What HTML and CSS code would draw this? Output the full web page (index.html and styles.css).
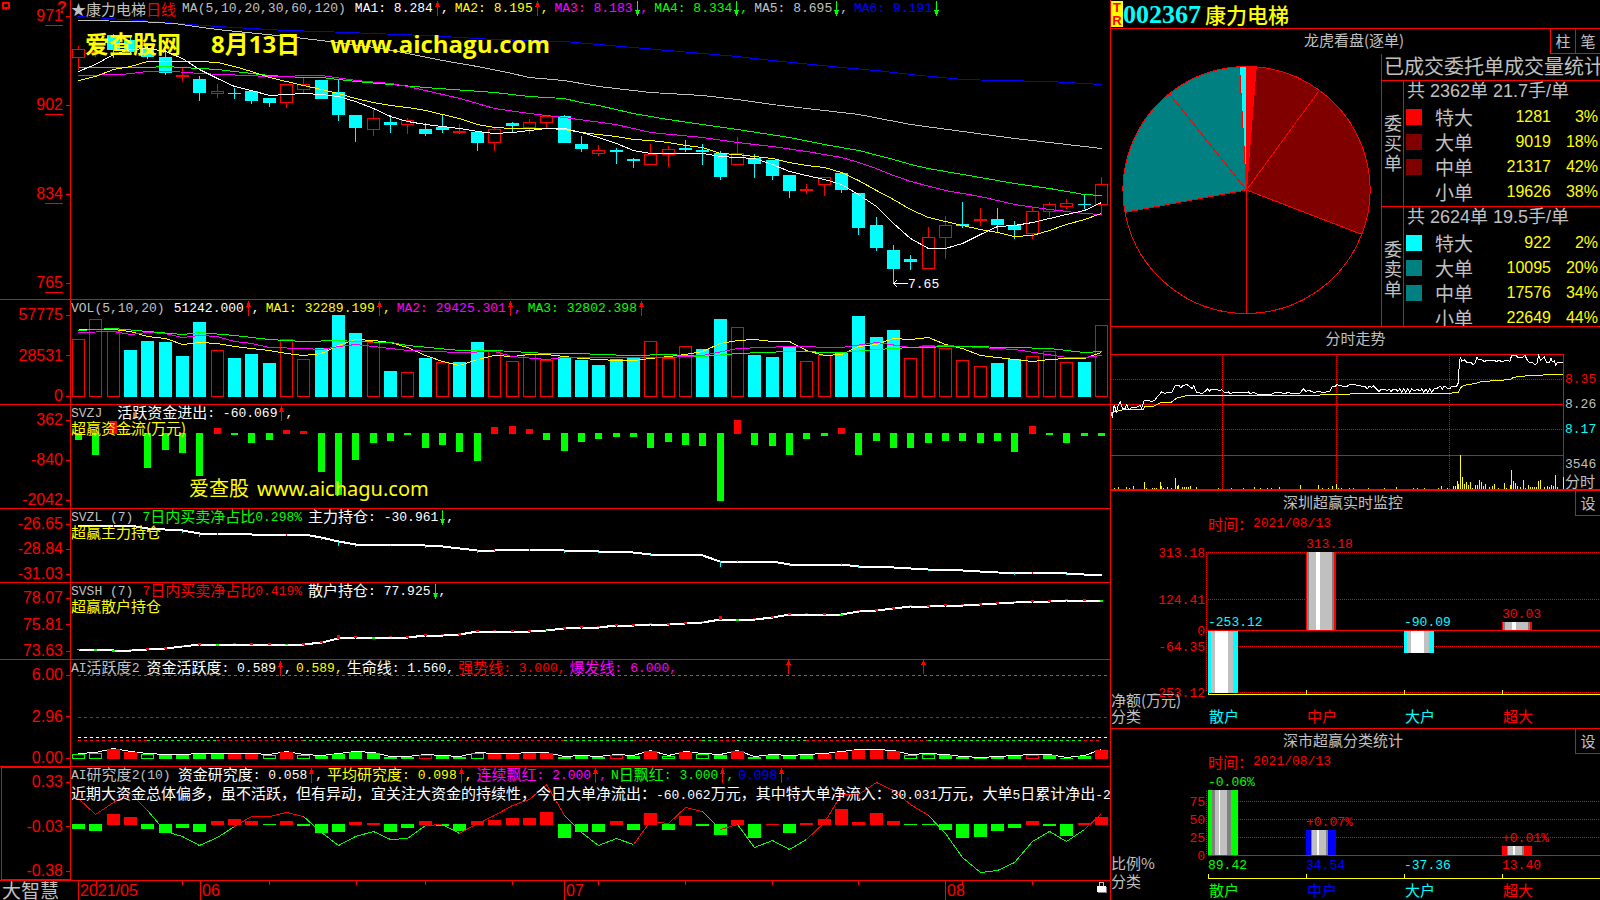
FILE: index.html
```html
<!DOCTYPE html>
<html lang="zh-CN">
	<head>
		<meta charset="utf-8">
		<title>大智慧 - 康力电梯 002367</title>
		<link rel="stylesheet" href="styles.css">
	</head>
	<body>
		<!-- trend arrows used next to the indicator values -->
		<svg class="defs">
			<symbol id="up" viewBox="0 0 8 15"><path stroke="#f00" fill="none" d="M4.5 0V15M2 5.5H7M3 4.5H6M3 3.5H6M3 2.5H6" /></symbol>
			<symbol id="down" viewBox="0 0 8 15"><path stroke="#0f0" fill="none" d="M4.5 0V15M2 9.5H7M3 10.5H6M3 11.5H6M3 12.5H6" /></symbol>
		</svg>

		<main class="terminal">
			<div class="charts">
				<section class="panel kline">
					<div class="axis">
						<svg class="mark" width="8" height="8"><path d="M1 1H7V6H1ZM4 6V8" stroke="#f00" stroke-width="2" fill="none" /></svg>
						<span class="help">?</span>
						<span>971</span><span>902</span><span>834</span><span>765</span>
					</div>
					<div class="plot">
						<svg id="kline" viewBox="71 0 1039 299" preserveAspectRatio="none"></svg>
						<div class="legend gray">
							<span class="c">★康力电梯<span class="red">日线</span></span>
							<span class="params">MA(5,10,20,30,60,120)</span>
							<span class="white">MA1: 8.284<svg><use href="#up" /></svg>,</span>
							<span class="yellow">MA2: 8.195<svg><use href="#up" /></svg>,</span>
							<span class="magenta">MA3: 8.183<svg><use href="#down" /></svg>,</span>
							<span class="green">MA4: 8.334<svg><use href="#down" /></svg>,</span>
							<span class="gray">MA5: 8.695<svg><use href="#down" /></svg>,</span>
							<span class="blue">MA6: 9.191<svg><use href="#down" /></svg></span>
						</div>
						<div class="banner"><span>爱查股网</span><span>8月13日</span><span>www.aichagu.com</span></div>
					</div>
				</section>

				<section class="panel vol">
					<div class="axis"><span>57775</span><span>28531</span><span>0</span></div>
					<div class="plot">
						<svg id="vol" viewBox="71 300 1039 104" preserveAspectRatio="none"></svg>
						<div class="legend">
							<span class="params gray">VOL(5,10,20)</span>
							<span class="white">51242.000<svg><use href="#up" /></svg>,</span>
							<span class="yellow">MA1: 32289.199<svg><use href="#up" /></svg>,</span>
							<span class="magenta">MA2: 29425.301<svg><use href="#up" /></svg>,</span>
							<span class="green">MA3: 32802.398<svg><use href="#up" /></svg></span>
						</div>
					</div>
				</section>

				<section class="panel flow">
					<div class="axis"><span>362</span><span>-840</span><span>-2042</span></div>
					<div class="plot">
						<svg id="flow" viewBox="71 405 1039 103" preserveAspectRatio="none"></svg>
						<div class="legend">
							<span class="name gray">SVZJ</span>
							<span class="white"><b>活跃资金进出</b>: -60.069<svg><use href="#up" /></svg>,</span>
						</div>
						<p class="caption">超赢资金流(万元)</p>
						<div class="banner small"><span>爱查股</span><span>www.aichagu.com</span></div>
					</div>
				</section>

				<section class="panel main-hold">
					<div class="axis"><span>-26.65</span><span>-28.84</span><span>-31.03</span></div>
					<div class="plot">
						<svg id="mainHold" viewBox="71 509 1039 73" preserveAspectRatio="none"></svg>
						<div class="legend">
							<span class="params gray">SVZL (7)</span>
							<span class="green">7<b>日内买卖净占比</b>0.298%</span>
							<span class="white"><b>主力持仓</b>: -30.961<svg><use href="#down" /></svg>,</span>
						</div>
						<p class="caption">超赢主力持仓</p>
					</div>
				</section>

				<section class="panel retail-hold">
					<div class="axis"><span>78.07</span><span>75.81</span><span>73.63</span></div>
					<div class="plot">
						<svg id="retailHold" viewBox="71 583 1039 76" preserveAspectRatio="none"></svg>
						<div class="legend">
							<span class="params gray">SVSH (7)</span>
							<span class="red">7<b>日内买卖净占比</b>0.419%</span>
							<span class="white"><b>散户持仓</b>: 77.925<svg><use href="#down" /></svg>,</span>
						</div>
						<p class="caption">超赢散户持仓</p>
					</div>
				</section>

				<section class="panel active">
					<div class="axis"><span>6.00</span><span>2.96</span><span>0.00</span></div>
					<div class="plot">
						<svg id="active" viewBox="71 660 1039 106" preserveAspectRatio="none"></svg>
						<div class="legend tight">
							<span class="params gray">AI<b>活跃度</b>2</span>
							<span class="white"><b>资金活跃度</b>: 0.589<svg><use href="#up" /></svg>,</span>
							<span class="yellow">0.589,</span>
							<span class="white"><b>生命线</b>: 1.560,</span>
							<span class="red"><b>强势线</b>: 3.000,</span>
							<span class="magenta"><b>爆发线</b>: 6.000,</span>
						</div>
					</div>
				</section>

				<section class="panel research">
					<div class="axis"><span>0.33</span><span>-0.03</span><span>-0.38</span></div>
					<div class="plot">
						<svg id="research" viewBox="71 767 1039 113" preserveAspectRatio="none"></svg>
						<div class="legend tight">
							<span class="params gray">AI<b>研究度</b>2(10)</span>
							<span class="white"><b>资金研究度</b>: 0.058<svg><use href="#up" /></svg>,</span>
							<span class="yellow"><b>平均研究度</b>: 0.098<svg><use href="#up" /></svg>,</span>
							<span class="magenta"><b>连续飘红</b>: 2.000<svg><use href="#up" /></svg>,</span>
							<span class="green">N<b>日飘红</b>: 3.000<svg><use href="#up" /></svg>,</span>
							<span class="blue">0.098<svg><use href="#up" /></svg>,</span>
						</div>
						<p class="comment"><b>近期大资金总体偏多，虽不活跃，但有异动，宜关注大资金的持续性，今日大单净流出：</b>-60.062<b>万元，其中特大单净流入：</b>30.031<b>万元，大单</b>5<b>日累计净出</b>-2</p>
					</div>
				</section>

				<footer class="dates">
					<span class="brand">大智慧</span>
					<svg id="dates" viewBox="71 881 1039 19"></svg>
				</footer>
			</div>

			<aside class="side">
				<header class="stock">
					<span class="tr"><i>T</i><i>R</i></span>
					<span class="code">002367</span>
					<h1>康力电梯</h1>
				</header>

				<section class="orders">
					<div class="title wide">
						<h2>龙虎看盘(逐单)</h2>
						<button type="button">柱</button><button type="button">笔</button>
					</div>
					<div class="orders-body">
						<svg id="pie" viewBox="0 0 270 272"></svg>
						<div class="stats">
							<h3>已成交委托单成交量统计</h3>
							<div class="group">
								<div class="side-name">委买单</div>
								<table>
									<caption>共 2362单 21.7手/单</caption>
									<tr><td><i class="sw" style="background:#f00"></i></td><th>特大</th><td>1281</td><td>3%</td></tr>
									<tr><td><i class="sw" style="background:#800000"></i></td><th>大单</th><td>9019</td><td>18%</td></tr>
									<tr><td><i class="sw" style="background:#800000"></i></td><th>中单</th><td>21317</td><td>42%</td></tr>
									<tr><td></td><th>小单</th><td>19626</td><td>38%</td></tr>
								</table>
							</div>
							<div class="group">
								<div class="side-name">委卖单</div>
								<table>
									<caption>共 2624单 19.5手/单</caption>
									<tr><td><i class="sw" style="background:#0ff"></i></td><th>特大</th><td>922</td><td>2%</td></tr>
									<tr><td><i class="sw" style="background:#008080"></i></td><th>大单</th><td>10095</td><td>20%</td></tr>
									<tr><td><i class="sw" style="background:#008080"></i></td><th>中单</th><td>17576</td><td>34%</td></tr>
									<tr><td></td><th>小单</th><td>22649</td><td>44%</td></tr>
								</table>
							</div>
						</div>
					</div>
				</section>

				<section class="intraday">
					<h2>分时走势</h2>
					<div class="intraday-body">
						<svg id="intraday" viewBox="18 88 1359 405" preserveAspectRatio="none"></svg>
						<div class="prices">
							<span class="red">8.35</span>
							<span class="gray">8.26</span>
							<span class="cyan">8.17</span>
							<span class="gray vmax">3546</span>
							<span class="gray"><b>分时</b></span>
						</div>
					</div>
				</section>

				<section class="monitor">
					<div class="title"><h2>深圳超赢实时监控</h2><button type="button">设</button></div>
					<p class="date"><b>时间：</b>2021/08/13</p>
					<svg id="monitor" viewBox="1111 532 489 196"></svg>
				</section>

				<section class="monitor classes">
					<div class="title"><h2>深市超赢分类统计</h2><button type="button">设</button></div>
					<p class="date"><b>时间：</b>2021/08/13</p>
					<svg id="classes" viewBox="1111 770 489 130"></svg>
				</section>
			</aside>
		</main>
		<script src="script.js"></script>
	</body>
</html>
```

FILE: styles.css
```css
*
{
	box-sizing: border-box;
	margin: 0;
	padding: 0;
}
body
{
	background: #000;
	color: #c0c0c0;
	font: 13px/16px "Liberation Mono", "Noto Sans CJK SC", monospace;
	overflow: hidden;
}
h1, h2, h3, th, caption, b
{
	font-weight: normal;
}
h2, b, .c
{
	font-family: "Noto Sans CJK SC", sans-serif;
	font-size: 15px;
	line-height: 16px;
}
i
{
	font-style: normal;
}
svg
{
	display: block;
	shape-rendering: crispEdges;
}
.defs
{
	display: none;
}

.red { color: #f00; }
.green { color: #0f0; }
.blue { color: #00f; }
.cyan { color: #0ff; }
.yellow { color: #ff0; }
.magenta { color: #f0f; }
.white { color: #fff; }
.gray { color: #c0c0c0; }

.terminal
{
	display: grid;
	grid-template-columns: minmax(0, 1110fr) minmax(0, 490fr);
	height: 100vh;
}

/* left side: stacked indicator panels */
.charts
{
	display: grid;
	grid-template-rows: 300fr 105fr 104fr 74fr 77fr 107fr 114fr 19fr;
	min-height: 0;
}
.panel
{
	display: grid;
	grid-template-columns: 71px minmax(0, 1fr);
	min-height: 0;
	border-bottom: 1px solid #f00;
}
.axis
{
	position: relative;
	display: flex;
	flex-direction: column;
	justify-content: space-between;
	padding-top: 7px;
	border-right: 1px solid #f00;
	color: #f00;
	font-family: "Liberation Sans", sans-serif;
	font-size: 16px;
}
.axis span
{
	position: relative;
	display: flex;
	justify-content: flex-end;
	align-items: center;
	gap: 3px;
}
.axis span::after
{
	content: "";
	width: 4px;
	height: 1px;
	background: #f00;
}
.kline .axis
{
	padding: 8px 0;
}
.kline .axis span::before
{
	content: "";
	position: absolute;
	right: 7px;
	bottom: -2px;
	width: 18px;
	height: 1px;
	background: #f00;
}
.axis .mark
{
	position: absolute;
	left: 2px;
	top: 2px;
}
.axis .help
{
	position: absolute;
	left: 57px;
	top: 0;
	font-weight: bold;
}
.kline .axis .help::before, .axis .help::after
{
	display: none;
}
.research .axis
{
	margin-left: 1px;
	border: 1px solid #f00;
	padding-top: 6px;
}
.plot
{
	position: relative;
	overflow: hidden;
}
.plot > svg
{
	position: absolute;
	width: 100%;
	height: 100%;
}
.plot > svg *
{
	vector-effect: non-scaling-stroke;
}
.legend
{
	position: relative;
	display: flex;
	gap: 6px;
	height: 16px;
	padding-top: 1px;
	white-space: pre;
}
.legend.tight
{
	gap: 4px;
}
.legend > span
{
	display: flex;
	align-items: center;
}
.legend b
{
	margin-top: -4px;
}
.legend svg
{
	width: 8px;
	height: 15px;
}
.legend .params
{
	margin-right: 3px;
}
.legend .name
{
	margin-right: 9px;
}
.caption
{
	position: relative;
	color: #ff0;
	font: 15px/13px "Noto Sans CJK SC", sans-serif;
}
.comment
{
	position: relative;
	margin-top: 2px;
	color: #fff;
	white-space: nowrap;
}
.banner
{
	position: absolute;
	left: 14px;
	top: 30px;
	display: flex;
	gap: 30px;
	color: #ff0;
	font: bold 24px/28px "Open Sans", "Noto Sans CJK SC", sans-serif;
}
.banner.small
{
	left: 118px;
	top: 70px;
	gap: 8px;
	font: 20px/28px "Noto Sans", "Noto Sans CJK SC", sans-serif;
}
.dates
{
	display: grid;
	grid-template-columns: 71px minmax(0, 1fr);
	min-height: 0;
}
.brand
{
	padding-left: 2px;
	font: 19px/18px "Noto Sans CJK SC", sans-serif;
}
svg text
{
	font: 13px "Liberation Mono", "Noto Sans CJK SC", monospace;
}
svg text.cn
{
	font: 15px "Noto Sans CJK SC", sans-serif;
}
svg text.month
{
	font: 16px "Liberation Sans", sans-serif;
}

/* right side */
.side
{
	display: grid;
	grid-template-rows: 29fr 298fr 164fr 238fr 171fr;
	min-width: 0;
	min-height: 0;
	border-left: 1px solid #f00;
}
.side > *
{
	min-height: 0;
	overflow: hidden;
	border-bottom: 1px solid #f00;
}
.stock
{
	display: flex;
	align-items: center;
}
.tr
{
	display: flex;
	flex-direction: column;
	align-items: center;
	width: 12px;
	background: #ff0;
	color: #f00;
	font: bold 13px/13px "Liberation Sans", sans-serif;
}
.code
{
	padding-top: 2px;
	color: #0ff;
	font: bold 26px/26px "Liberation Serif", serif;
}
.stock h1
{
	padding-left: 4px;
	color: #ff0;
	font: 500 21px/26px "Noto Sans CJK SC", sans-serif;
}
.title
{
	display: flex;
	flex: none;
	height: 25px;
}
.title h2
{
	flex: 1;
	padding-top: 3px;
	text-align: center;
}
.title.wide h2
{
	padding-left: 47px;
}
.title button
{
	width: 25px;
	background: #000;
	border: solid #f00;
	border-width: 0 0 1px 1px;
	color: #c0c0c0;
	font: 15px/20px "Noto Sans CJK SC", sans-serif;
}
.orders
{
	display: flex;
	flex-direction: column;
}
.orders-body
{
	flex: 1;
	display: grid;
	grid-template-columns: minmax(0, 270fr) minmax(0, 219fr);
	grid-template-rows: minmax(0, 1fr);
	min-height: 0;
}
#pie
{
	width: 100%;
	height: 100%;
}
.stats
{
	border-left: 1px solid #f00;
}
.stats h3
{
	height: 27px;
	padding-left: 2px;
	border-bottom: 1px solid #f00;
	font: 20px/24px "Noto Sans CJK SC", sans-serif;
	white-space: nowrap;
}
.group
{
	display: flex;
	height: 125px;
}
.group + .group
{
	border-top: 1px solid #f00;
	height: 120px;
}
.side-name
{
	width: 22px;
	padding: 31px 2px 0;
	border-right: 1px solid #f00;
	font: 18px/20px "Noto Sans CJK SC", sans-serif;
}
table
{
	flex: 1;
	align-self: flex-start;
	border-collapse: collapse;
	font: 16px/20px "Liberation Sans", sans-serif;
}
caption
{
	height: 23px;
	padding-left: 3px;
	font: 18px/21px "Liberation Sans", "Noto Sans CJK SC", sans-serif;
	text-align: left;
}
tr
{
	height: 25px;
}
th
{
	font: 19px/20px "Noto Sans CJK SC", sans-serif;
}
td
{
	color: #ff0;
	text-align: right;
}
td:first-child
{
	width: 21px;
}
td:last-child
{
	width: 49px;
	padding-right: 2px;
}
.sw
{
	display: block;
	width: 16px;
	height: 16px;
	margin-left: 2px;
}
.intraday
{
	display: flex;
	flex-direction: column;
}
.side .intraday
{
	border-bottom-width: 2px;
}
.intraday h2
{
	padding: 3px 0 8px;
	text-align: center;
}
.intraday-body
{
	flex: 1;
	display: grid;
	grid-template-columns: minmax(0, 1fr) 36px;
	grid-template-rows: minmax(0, 1fr);
	min-height: 0;
}
#intraday
{
	width: 100%;
	height: 100%;
}
#intraday *
{
	vector-effect: non-scaling-stroke;
}
.prices
{
	display: flex;
	flex-direction: column;
	gap: 9px;
	padding: 18px 0 0 1px;
}
.prices .vmax
{
	margin: 10px 0 -9px;
}
.prices b
{
	display: block;
}
.monitor
{
	display: flex;
	flex-direction: column;
}
.date
{
	display: flex;
	align-items: center;
	flex: none;
	height: 16px;
	padding-left: 97px;
	color: #f00;
}
.monitor svg
{
	flex: 1;
	min-height: 0;
	width: 100%;
}
.side .classes
{
	border-bottom: 0;
}
```

FILE: script.js
```javascript
var NS = "http://www.w3.org/2000/svg";
var RED = "#f00", GREEN = "#0f0", CYAN = "#0ff", YELLOW = "#ff0", WHITE = "#fff", GRAY = "#c0c0c0", MAGENTA = "#f0f", BLUE = "#00f";

// x of the middle of day i
function dayX(i)
{
	return Math.round(78 + 17.34 * i) + 0.5;
}

function add(svg, tag, attrs)
{
	var el = document.createElementNS(NS, tag);
	for (var k in attrs)
	{
		el.setAttribute(k, attrs[k]);
	}
	svg.appendChild(el);
	return el;
}

function box(svg, x, y, w, h, color)
{
	add(svg, "rect", {x: x, y: y, width: w, height: h, fill: color});
}

function frame(svg, x, y, w, h, color)
{
	add(svg, "rect", {x: x + 0.5, y: y + 0.5, width: w - 1, height: Math.max(h - 1, 0), fill: "none", stroke: color});
}

function seg(svg, x1, y1, x2, y2, color, dash)
{
	add(svg, "path", {d: "M" + x1 + " " + y1 + "L" + x2 + " " + y2, stroke: color, "stroke-dasharray": dash || "none"});
}

function poly(svg, pts, color, width)
{
	add(svg, "polyline", {points: pts.join(" "), fill: "none", stroke: color, "stroke-width": width || 1});
}

function label(svg, x, y, text, color, cls, anchor)
{
	var t = add(svg, "text", {x: x, y: y, fill: color, "class": cls || "", "text-anchor": anchor || "start"});
	t.textContent = text;
}

// one value per day
function daily(values)
{
	return values.map(function (v, i) { return [dayX(i), v + 0.5]; });
}

// [day, value] pairs
function sparse(pairs)
{
	return pairs.map(function (p) { return [78.5 + 17.34 * p[0], p[1] + 0.5]; });
}

// kind, high, body top, body bottom, low
var candles = [
	["r",46,49,58,70],["r",36,51,53,57],["c",34,35,50,58],["c",36,40,52,53],["c",46,48,57,59],["c",50,57,73,75],
	["r",67,75,77,81],["c",76,79,93,101],["r",84,91,94,98],["c",88,93,94,99],["c",91,91,101,104],["c",98,98,103,107],
	["r",84,84,103,108],["r",78,84,90,93],["c",80,80,99,99],["c",80,92,115,121],["c",115,115,128,142],["r",110,118,130,136],
	["c",115,122,125,133],["r",118,120,125,134],["c",123,129,134,136],["c",114,127,130,133],["r",124,131,133,134],["c",132,132,143,151],
	["r",128,129,143,151],["c",122,123,126,133],["r",119,122,128,134],["r",116,116,123,129],["c",115,116,143,143],["c",136,144,149,152],
	["r",145,150,154,156],["c",148,150,152,164],["c",158,159,161,168],["r",144,154,165,165],["r",146,149,155,167],["c",140,148,150,152],
	["c",144,150,152,165],["c",151,153,177,180],["r",137,153,165,165],["c",154,158,164,178],["c",160,160,176,180],["c",175,175,191,198],
	["r",184,189,191,194],["r",177,177,185,196],["c",173,173,190,193],["c",193,193,228,235],["c",217,225,248,251],["c",245,250,269,284],
	["c",255,259,262,270],["r",227,237,269,269],["r",216,225,238,259],["c",202,224,226,228],["r",208,219,221,226],["c",208,219,225,232],
	["c",221,225,230,239],["r",208,211,234,239],["r",202,204,212,217],["r",199,203,207,209],["c",194,204,205,209],["r",177,184,205,215]
];

function drawKline()
{
	var s = document.getElementById("kline");
	candles.forEach(function (c, i)
	{
		var x = dayX(i), left = x - 6.5, color = c[0] == "r" ? RED : CYAN;
		seg(s, x, c[1], x, c[2], color);
		seg(s, x, c[3], x, c[4], color);
		if (c[0] == "r" && c[3] - c[2] > 2)
		{
			frame(s, left, c[2], 13, c[3] - c[2], color);
		}
		else
		{
			box(s, left, c[2], 13, c[3] - c[2], color);
		}
	});

	poly(s, sparse([[0,16],[3.5,20],[5,22],[8,26],[12,30],[14,31],[17,33],[20,35],[24,39],[28,41],[30,44],[32,47],[34,50],[36,53],[38,56],[40,60],[44,67],[46,70],[48,74],[51,79],[53,80],[56,81],[59,84]]), BLUE);
	poly(s, sparse([[0,20],[3.5,21],[5.5,23],[8,29],[12,36],[14,40],[17.5,48],[21,60],[23,66],[25,73],[26,77],[28,80],[30,86],[33,92],[36,95],[38,99],[40,104],[44,112],[45,114],[48,124],[51,131],[54,138],[59,148]]), GRAY);
	poly(s, sparse([[0,67],[4,67],[5,66],[8,69],[9,71],[11,75],[13,77],[14,77],[16,81],[20,87],[24,92],[26,96],[28,98],[29,102],[30,105],[32,113],[34,119],[36,124],[38,129],[41,137],[43,144],[45,150],[47,159],[48,164],[49,168],[51,174],[54,183],[56,188],[58,194],[59,195]]), GREEN);
	poly(s, sparse([[0,75],[2.5,74],[4,71],[5.5,71],[7,73],[11,76],[14,75],[16,80],[18,83],[19,86],[20,90],[22,98],[24,108],[26,113],[28,117],[31,124],[33,132],[36,137],[38,142],[40,146],[42,151],[44,157],[45,162],[46,168],[47,175],[48,181],[50,190],[52,196],[54,204],[56,209],[58,213],[59,214]]), MAGENTA);
	poly(s, daily([80,76,69,66,61,61,61,61,62,66,71,77,81,85,89,93,98,102,105,107,110,114,118,124,127,128,128,128,129,132,134,136,139,140,142,145,147,153,154,156,158,162,165,167,172,180,190,199,209,217,221,225,229,232,236,235,230,224,219,213]), YELLOW);
	poly(s, daily([71,64,54,49,48,51,58,69,78,86,90,95,94,93,94,96,101,108,116,121,124,126,128,131,133,132,130,128,128,132,137,143,150,153,153,153,153,156,157,158,164,171,175,179,184,194,206,223,238,248,248,243,234,226,225,222,218,214,210,202]), WHITE);

	seg(s, 894, 283.5, 908, 283.5, WHITE);
	seg(s, 893.5, 283.5, 897, 280, WHITE);
	seg(s, 893.5, 283.5, 897, 287, WHITE);
	label(s, 908, 288, "7.65", WHITE);
}

var volTop = [339,319,331,350,341,342,356,322,350,358,354,363,339,359,348,315,333,342,371,372,358,362,362,342,351,361,354,360,357,360,365,359,358,341,358,346,349,319,327,355,357,347,361,355,353,316,337,330,358,345,348,360,366,363,359,356,351,362,362,325];
// days whose volume bar is a red outline
var volUp = [0,1,2,8,12,13,17,19,21,24,25,26,27,33,34,35,38,42,43,48,49,50,51,52,55,56,57,59];

function drawVol()
{
	var s = document.getElementById("vol");
	volTop.forEach(function (y, i)
	{
		var up = volUp.indexOf(i) >= 0;
		(up ? frame : box)(s, dayX(i) - 6.5, y, 13, 397 - y, up ? RED : CYAN);
	});
	poly(s, daily([329,329,329,331,336,338,344,342,343,346,348,350,353,355,353,345,339,340,342,347,355,361,365,359,355,356,354,354,356,358,359,360,360,358,356,354,351,343,340,339,341,341,350,355,354,346,344,338,339,337,344,348,355,357,359,361,359,358,358,352]), YELLOW);
	poly(s, sparse([[0,332],[2,331],[3,334],[4,332],[5,333],[6,337],[7,335],[8,336],[9,341],[10,343],[11,347],[13,348],[14,349],[15,346],[16,344],[17,346],[19,350],[22,352],[24,351],[25,356],[27,359],[28,357],[34,357],[36,355],[38,348],[41,346],[44,347],[46,342],[48,347],[49,346],[50,345],[52,347],[54,349],[57,357],[58,357],[59,355]]), MAGENTA);
	poly(s, sparse([[0,330],[2,328],[4,331],[6,334],[7,332],[9,335],[11,339],[13,341],[15,340],[16,341],[18,342],[19,345],[22,350],[24,350],[27,353],[29,353],[30,354],[32,355],[34,354],[36,356],[38,353],[41,351],[44,352],[46,349],[48,347],[51,346],[54,347],[56,348],[58,352],[59,351]]), GREEN);
}

// bars around a zero line, up is red and down is green
function drawBars(s, values, zero, width)
{
	values.forEach(function (v, i)
	{
		var left = dayX(i) - width / 2;
		if (v > 0)
		{
			box(s, left, zero + 1 - v, width, v, RED);
		}
		else
		{
			box(s, left, zero, width, -v, GREEN);
		}
	});
}

function drawFlow()
{
	drawBars(document.getElementById("flow"), [-7,-22,13,-1,-35,-17,-20,-43,6,-2,-10,-7,4,3,-39,-62,-27,-10,-8,-2,-15,-12,-19,-28,7,8,5,-7,-18,-9,-6,-4,-4,-15,-9,-12,-13,-68,14,-12,-13,-22,-6,-3,6,-22,-8,-15,-15,-10,-8,-8,-10,-8,-19,8,-2,-10,-3,-3], 433, 7);
}

function drawHoldings()
{
	var s = document.getElementById("mainHold");
	poly(s, sparse([[0,526],[2,525],[3,525],[4,528],[5,529],[6,530],[7,533],[9,533],[10,534],[13,534],[14,537],[15,541],[16,544],[19,544],[20,545],[21,546],[22,548],[23,550],[24,550],[25,549],[27,549],[28,550],[30,551],[32,552],[33,554],[36,555],[37,561],[40,561],[41,564],[44,564],[45,566],[47,567],[49,569],[51,570],[53,572],[57,573],[58,574],[59,574]]), WHITE, 2);
	[[4,529,2],[6,531,2],[7,533,4],[14,538,2],[15,542,4],[16,545,2],[18,545,1],[20,546,2],[23,550,3],[28,551,2],[30,552,1],[33,554,2],[37,561,6],[41,564,2],[45,566,2],[49,570,1],[54,573,2],[57,574,1]].forEach(function (m)
	{
		box(s, dayX(m[0]) - 0.5, m[1], 1, m[2], CYAN);
	});
	[[2,525],[8,533],[12,534],[24,549],[26,549],[38,560],[44,563],[55,572]].forEach(function (m)
	{
		box(s, dayX(m[0]) - 0.5, m[1], 1, 2, RED);
	});

	s = document.getElementById("retailHold");
	var y = [649,649,650,650,649,648,646,644,644,644,644,644,644,644,642,638,637,637,637,637,635,635,634,631,631,631,631,630,628,627,627,625,625,624,624,623,622,619,619,619,617,614,614,614,614,611,610,608,606,606,605,605,604,603,602,601,601,600,600,600];
	poly(s, daily(y), WHITE, 2);
	y.forEach(function (v, i)
	{
		var down = [0, 1, 2, 8, 12, 17, 27, 38, 44, 59].indexOf(i) >= 0;
		var h = i == 15 || i == 37 ? 4 : 2;
		box(s, dayX(i) - 1.5, down ? v : v + 1 - h, 3, h == 4 ? 4 : i % 3 ? 2 : 1, down ? GREEN : RED);
	});
}

function drawActive()
{
	var s = document.getElementById("active");
	var h = [5,6,10,7,5,4,4,5,5,5,5,4,7,4,3,5,7,6,2,2,4,3,2,6,5,5,6,6,2,3,2,4,3,8,3,7,5,4,8,2,4,3,4,5,7,9,9,8,4,5,4,2,1,2,3,4,4,1,3,9];
	// capital letters are filled bars
	var kinds = "ggRRgGGGGRRgRgGGGGGGrGGgRRRRGGGrGRgRgGRGGGGRRRRRggGGGGGrGGGR";
	seg(s, 78, 675.5, 1108, 675.5, MAGENTA, "3 3");
	seg(s, 78, 717.5, 1108, 717.5, RED, "3 3");
	seg(s, 78, 737.5, 1108, 737.5, WHITE, "3 3");
	var stops = [0, 4, 8, 13, 22, 28, 32, 36, 37, 38, 42, 49, 58, 59];
	for (var i = 0; i < stops.length - 1; i++)
	{
		seg(s, dayX(stops[i]) - 0.5, 740.5, dayX(stops[i + 1]) - 0.5, 740.5, i % 2 ? GREEN : RED, "3 3");
	}
	poly(s, daily(h.map(function (v) { return 758 - v; })), WHITE);
	h.forEach(function (v, i)
	{
		var k = kinds[i], color = k.toLowerCase() == "r" ? RED : GREEN;
		(k == k.toUpperCase() ? box : frame)(s, dayX(i) - 6.5, 759 - v, 13, v, color);
	});
	[788.5, 923.5].forEach(function (x)
	{
		seg(s, x, 660, x, 674, RED);
		box(s, x - 2.5, 664, 5, 1, RED);
		box(s, x - 1.5, 662, 3, 2, RED);
	});
}

function drawResearch()
{
	var s = document.getElementById("research");
	drawBars(s, [-5,-7,11,8,-5,-9,-4,-8,4,6,4,-1,4,-2,-9,-8,3,2,-8,-4,4,-2,-7,4,5,7,7,13,-14,-8,-8,4,-6,12,-6,9,-2,-11,5,-14,1,-9,2,6,16,3,12,4,-1,-1,-6,-14,-13,-7,-4,4,-2,-12,2,8], 824, 13);
	var pts = daily([798,814,802,793,810,831,836,845,837,826,816,816,812,816,832,845,836,831,839,838,825,824,833,823,815,805,799,784,815,832,845,838,844,821,823,807,811,829,824,847,840,849,839,822,794,794,782,790,804,815,833,857,872,870,862,841,831,841,829,813]);
	var stops = [0, 4, 9, 13, 20, 21, 22, 28, 32, 36, 37, 38, 42, 49, 58, 59];
	for (var i = 0; i < stops.length - 1; i++)
	{
		poly(s, pts.slice(stops[i], stops[i + 1] + 1), i % 2 ? GREEN : RED);
	}
}

function drawDates()
{
	var s = document.getElementById("dates");
	[[78, "2021/05"], [200, "06"], [564, "07"], [945, "08"]].forEach(function (m)
	{
		box(s, m[0], 881, 1, 19, RED);
		label(s, m[0] + 2, 896, m[1], RED, "month");
	});
	[96, 182, 269, 356, 425, 512, 598, 685, 772, 858, 962, 1032].forEach(function (x)
	{
		box(s, x, 881, 1, 4, RED);
	});
	// padlock
	frame(s, 1099, 882, 5, 5, GRAY);
	box(s, 1098, 887, 9, 6, "#808080");
	box(s, 1097, 886, 9, 6, WHITE);
}

function drawPie()
{
	var s = document.getElementById("pie"), cx = 135.5, cy = 136, r = 123.5;
	function at(a)
	{
		a = a * Math.PI / 180;
		return (cx + r * Math.sin(a)) + " " + (cy - r * Math.cos(a));
	}
	function half(amounts, colors, dir)
	{
		var total = amounts.reduce(function (a, b) { return a + b; }), a = 0;
		amounts.forEach(function (n, i)
		{
			var b = a + n / total * 180;
			add(s, "path", {
				d: "M" + cx + " " + cy + "L" + at(a * dir) + "A" + r + " " + r + " 0 0 " + (dir > 0 ? 1 : 0) + " " + at(b * dir) + "Z",
				fill: colors[i], stroke: RED
			});
			a = b;
		});
	}
	half([1281, 9019, 21317, 19626], [RED, "#800000", "#800000", "#000"], 1);
	half([922, 10095, 17576, 22649], [CYAN, "#008080", "#008080", "#000"], -1);
}

function drawIntraday()
{
	var s = document.getElementById("intraday");
	[164.5, 314.5].forEach(function (y) { seg(s, 18, y, 1376, y, RED, "1 1"); });
	[352.5, 694.5, 1033.5].forEach(function (x) { seg(s, x, 88, x, 493, RED, "1 1"); });
	[89.5, 239.5, 392.5].forEach(function (y) { seg(s, 18, y, 1376, y, RED); });
	seg(s, 1375.5, 88, 1375.5, 493, RED);

	[[28,3],[40,6],[64,6],[73,4],[85,10],[118,22],[124,3],[142,3],[148,3],[154,3],[166,22],[170,10],[175,4],[187,6],[199,4],[211,33],[217,8],[220,12],[232,6],[238,6],[244,6],[250,6],[256,9],[274,6],[340,3],[378,3],[415,3],[448,6],[466,3],[487,3],[499,3],[523,6],[586,12],[640,12],[652,4],[670,4],[682,9],[694,15],[700,4],[709,4],[733,3],[745,3],[790,3],[838,3],[874,6],[925,3],[937,3],[958,3],[1000,4],[1009,9],[1027,3],[1045,8],[1051,8],[1057,24],[1060,15],[1066,102],[1072,36],[1078,15],[1084,21],[1090,12],[1096,21],[1102,3],[1111,12],[1117,12],[1123,27],[1129,21],[1135,9],[1141,15],[1153,6],[1162,8],[1168,15],[1180,3],[1198,18],[1204,3],[1216,12],[1219,57],[1225,24],[1231,18],[1237,10],[1246,6],[1255,27],[1261,4],[1270,12],[1276,6],[1282,6],[1288,6],[1294,6],[1300,24],[1306,27],[1318,6],[1327,9],[1333,6],[1339,12],[1345,8],[1351,42],[1357,6],[1374,36]].forEach(function (v)
	{
		box(s, v[0] - 1, 493 - v[1], 3, v[1], YELLOW);
	});

	poly(s, [[18,265],[45,257],[65,253],[115,253],[120,246],[148,244],[168,234],[200,232],[215,220],[240,214],[290,213],[295,211],[645,211],[655,208],[735,208],[740,205],[1040,205],[1045,202],[1060,202],[1070,185],[1085,180],[1110,177],[1125,172],[1165,168],[1215,165],[1225,158],[1260,154],[1300,152],[1345,149],[1375,148]], YELLOW);
	poly(s, [[18,265],[22,275],[28,240],[34,265],[40,240],[46,232],[52,250],[60,252],[65,240],[72,256],[80,248],[95,248],[105,242],[110,250],[118,226],[130,226],[140,232],[150,226],[158,215],[170,202],[180,207],[190,202],[200,204],[210,184],[222,182],[228,190],[234,182],[246,180],[262,192],[266,183],[274,202],[282,204],[290,208],[298,202],[308,193],[314,199],[320,193],[335,193],[342,199],[350,195],[358,204],[370,202],[376,208],[385,203],[430,202],[436,207],[445,203],[455,208],[500,208],[512,203],[528,203],[536,208],[550,203],[560,208],[585,205],[595,193],[602,200],[612,197],[628,204],[640,199],[652,204],[675,200],[682,185],[690,185],[696,180],[710,184],[728,184],[736,178],[750,178],[756,183],[780,185],[787,192],[793,184],[800,188],[806,184],[815,193],[822,200],[830,193],[840,193],[846,199],[852,193],[858,200],[865,193],[872,193],[878,200],[884,193],[890,203],[896,193],[902,203],[908,193],[914,203],[920,193],[930,199],[936,193],[945,199],[950,193],[957,203],[963,193],[968,203],[974,193],[980,203],[988,192],[998,190],[1005,184],[1012,193],[1018,184],[1026,190],[1034,193],[1040,185],[1055,184],[1060,175],[1063,115],[1066,97],[1070,110],[1078,106],[1085,112],[1098,112],[1104,121],[1110,115],[1116,98],[1122,106],[1130,105],[1138,111],[1146,106],[1168,107],[1175,111],[1182,106],[1190,111],[1205,106],[1215,110],[1220,91],[1232,91],[1238,97],[1254,97],[1260,91],[1265,103],[1272,112],[1282,112],[1290,121],[1296,115],[1301,91],[1306,107],[1318,97],[1324,112],[1334,112],[1338,100],[1342,112],[1348,108],[1352,121],[1358,112],[1375,112]], WHITE);
}

// a shaded column: list of [color, width] stripes
function column(s, x, y, h, stripes)
{
	stripes.forEach(function (p)
	{
		box(s, x, y, p[1], h, p[0]);
		x += p[1];
	});
}

var X = [1208, 1306, 1404, 1502];
var DARK = "#808080";

function category(s, base, y, colors)
{
	box(s, 1208, base, 392, 1, YELLOW);
	["散户", "中户", "大户", "超大"].forEach(function (name, i)
	{
		box(s, X[i], base - 4, 1, 4, YELLOW);
		label(s, X[i] + 1, y, name, colors[i], "cn");
	});
}

function drawMonitor()
{
	var s = document.getElementById("monitor");
	[["313.18", 553], ["124.41", 600], ["0", 631], ["-64.35", 647], ["-253.12", 693]].forEach(function (a)
	{
		label(s, 1205, a[1] + 4, a[0], RED, "", "end");
	});
	[552.5, 599.5, 646.5, 692.5].forEach(function (y) { seg(s, 1208, y, 1600, y, RED, "1 1"); });
	seg(s, 1206.5, 552, 1206.5, 692, RED, "1 1");
	box(s, 1208, 630, 392, 1, RED);
	category(s, 694, 722, [CYAN, RED, CYAN, RED]);
	var down = [[CYAN, 3], [GRAY, 4], [WHITE, 13], [GRAY, 5], [CYAN, 5]];
	var up = [[RED, 1], [DARK, 2], [GRAY, 7], [WHITE, 4], [GRAY, 12], [DARK, 2], [RED, 2]];
	column(s, X[0], 631, 62, down);
	column(s, X[1], 552, 78, up);
	column(s, X[2], 631, 22, down);
	column(s, X[3], 622, 8, up);
	label(s, X[0], 626, "-253.12", CYAN);
	label(s, X[1], 548, "313.18", RED);
	label(s, X[2], 626, "-90.09", CYAN);
	label(s, X[3], 618, "30.03", RED);
	label(s, 1111, 706, "净额(万元)", GRAY, "cn");
	label(s, 1111, 722, "分类", GRAY, "cn");
}

function drawClasses()
{
	var s = document.getElementById("classes");
	[["75", 802], ["50", 820], ["25", 838], ["0", 856]].forEach(function (a)
	{
		label(s, 1205, a[1] + 4, a[0], RED, "", "end");
	});
	[801.5, 819.5, 837.5].forEach(function (y) { seg(s, 1208, y, 1600, y, RED, "1 1"); });
	seg(s, 1206.5, 791, 1206.5, 855, RED, "1 1");
	box(s, 1208, 855, 392, 1, RED);
	category(s, 878, 896, [GREEN, BLUE, CYAN, RED]);
	column(s, X[0], 790, 65, [[GREEN, 4], [DARK, 3], [GRAY, 4], [WHITE, 1], [GRAY, 7], [DARK, 4], [GREEN, 7]]);
	column(s, X[1], 830, 25, [[BLUE, 5], [DARK, 1], [GRAY, 5], [WHITE, 2], [GRAY, 7], [DARK, 2], [BLUE, 8]]);
	column(s, X[3], 846, 9, [[RED, 5], [DARK, 1], [GRAY, 5], [WHITE, 2], [GRAY, 7], [DARK, 2], [RED, 8]]);
	label(s, X[0], 786, "-0.06%", GREEN);
	label(s, X[1], 826, "+0.07%", RED);
	label(s, X[3], 842, "+0.01%", RED);
	label(s, X[0], 869, "89.42", GREEN);
	label(s, X[1], 869, "34.54", BLUE);
	label(s, X[2], 869, "-37.36", CYAN);
	label(s, X[3], 869, "13.40", RED);
	label(s, 1111, 869, "比例%", GRAY, "cn");
	label(s, 1111, 887, "分类", GRAY, "cn");
}

drawKline();
drawVol();
drawFlow();
drawHoldings();
drawActive();
drawResearch();
drawDates();
drawPie();
drawIntraday();
drawMonitor();
drawClasses();
```
